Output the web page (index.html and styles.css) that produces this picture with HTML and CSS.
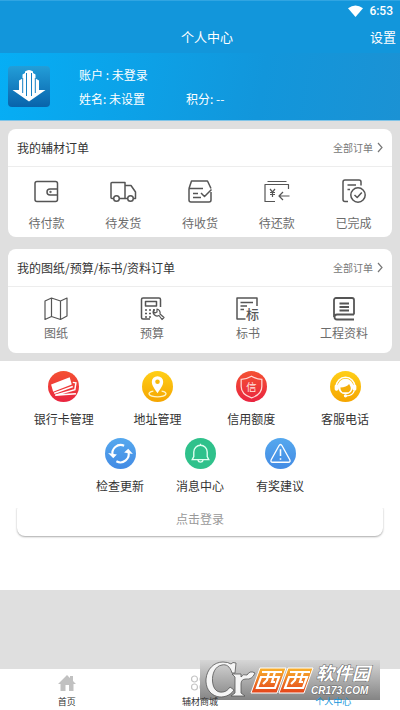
FILE: index.html
```html
<!DOCTYPE html>
<html lang="zh-CN">
<head>
<meta charset="utf-8">
<meta name="viewport" content="width=device-width, initial-scale=1">
<title>个人中心</title>
<link rel="stylesheet" href="styles.css">
</head>
<body>
<header class="top">
  <div class="status">
    <svg width="15" height="12" viewBox="0 0 15 12"><path d="M0 3.2Q7.500-2.400 15 3.200L7.500 12Z" fill="#fff"/></svg>
    <span>6:53</span>
  </div>
  <div class="bar">
    <h1>个人中心</h1>
    <a class="settings" href="#settings">设置</a>
  </div>
</header>
<section class="profile">
  <svg class="avatar" width="42" height="41" viewBox="0 0 42 41">
    <defs><linearGradient id="av" x2="0" y2="1"><stop stop-color="#239ed8"/><stop offset="1" stop-color="#0863ab"/></linearGradient></defs>
    <rect width="42" height="41" rx="4" fill="url(#av)"/>
    <path d="M4.500 24H11V14.500L14.500 12.500V8.500L17 7V5.500Q21 2.500 25 5.500V7L27.500 8.500V12.500L31 14.500V24H37.500L21 35.500Z" fill="#fff"/>
    <path d="M14.700 12V27M27.300 12V27M18.500 7V30M23.500 7V30" stroke="#1580c3" stroke-width="1"/>
  </svg>
  <div class="info">
    <p>账户 : 未登录</p>
    <div class="pair"><p>姓名: 未设置</p><p>积分: --</p></div>
  </div>
</section>
<main>
  <section class="card">
    <div class="card-head">
      <h2>我的辅材订单</h2>
      <a href="#orders">全部订单<svg width="6" height="11" viewBox="0 0 6 11"><path d="M1 1L5 5.500L1 10"/></svg></a>
    </div>
    <nav class="orders">
      <a href="#pay"><svg class="line" viewBox="0 0 28 28"><rect x="3" y="3.500" width="22.500" height="20" rx="2"/><path d="M25.500 11H18a3 3 0 0 0 0 6h7.500"/><circle cx="18.500" cy="14" r=".4"/></svg>待付款</a>
      <a href="#ship"><svg class="line" viewBox="0 0 28 28"><path d="M4.500 20.500H3a1 1 0 0 1-1-1V5.500a1 1 0 0 1 1-1H16V20.500H10.500M16 7.500H22L26.500 14V20.500H24.500M16 20.500H18.500"/><circle cx="7.500" cy="20.500" r="2.800"/><circle cx="21.500" cy="20.500" r="2.800"/></svg>待发货</a>
      <a href="#receive"><svg class="line" viewBox="0 0 28 28"><path d="M3 10.500L5.500 3H21.500L25 10.500M17 10.500H3V22a2 2 0 0 0 2 2H23a2 2 0 0 0 2-2V14M7 15.500H12M7 19.500H15M15 15L18.500 18.500L25.500 11.500"/></svg>待收货</a>
      <a href="#repay"><svg class="line thin" viewBox="0 0 28 28"><path d="M4.500 3.500H23.500M12 23.500H2V6.500H25.500V11M7 11L9.500 14L12 11M9.500 14V19M7 14.500H12M7 16.500H12M26.500 18H16M20 14L16 18L20 22"/></svg>待还款</a>
      <a href="#done"><svg class="line" viewBox="0 0 28 28"><path d="M8 23.500H5a2 2 0 0 1-2-2V4a2 2 0 0 1 2-2H19a2 2 0 0 1 2 2V7.500M7.500 7H16M7.500 11.500H10"/><circle cx="18" cy="17" r="7.200"/><path d="M14.500 17L17.200 19.500L21.800 14.500"/></svg>已完成</a>
    </nav>
  </section>
  <section class="card second">
    <div class="card-head">
      <h2>我的图纸/预算/标书/资料订单</h2>
      <a href="#documents">全部订单<svg width="6" height="11" viewBox="0 0 6 11"><path d="M1 1L5 5.500L1 10"/></svg></a>
    </div>
    <nav class="orders">
      <a href="#drawings"><svg class="line thin" viewBox="0 0 28 28"><path d="M3 6L9.500 3L18.500 6L25 3V21L18.500 24.500L9.500 21.500L3 24.500ZM9.500 3V21.500M18.500 6V24.500"/></svg>图纸</a>
      <a href="#budget"><svg class="line" viewBox="0 0 28 28"><path d="M12 24H5a1.500 1.500 0 0 1-1.500-1.500V4.500A1.500 1.500 0 0 1 5 3H21a1.500 1.500 0 0 1 1.500 1.500V12M7.500 6.500H18.500V11H7.500Z"/><path d="M7 15H17M7 18.500H14M7 22H14" stroke-dasharray="2 2"/><path d="M16 14.500a4 4 0 0 0 5 6L24 24.500L26 22.500L22 19a4 4 0 0 0-3-5V17L17 18L15.500 16.500Z" stroke-width="1.200"/></svg>预算</a>
      <a href="#bids"><svg class="line" viewBox="0 0 28 28"><path d="M11.500 24H3V3H23V11M6.500 7.500H19M6.500 11H13M6.500 14.500H10"/><text x="12" y="23.500">标</text></svg>标书</a>
      <a href="#project"><svg class="line bold" viewBox="0 0 28 28"><path d="M24 19.500H7a2.500 2.500 0 0 0 0 5H24M4 22V5a2 2 0 0 1 2-2H22a2 2 0 0 1 2 2V19.500M9.500 8.500H19M9.500 12H19M9.500 15.500H19"/></svg>工程资料</a>
    </nav>
  </section>
  <section class="tools">
    <nav class="tool-row">
      <a href="#cards"><svg viewBox="0 0 30 30"><defs><linearGradient id="red" x2="0" y2="1"><stop stop-color="#f45132"/><stop offset="1" stop-color="#e92440"/></linearGradient></defs><circle cx="15" cy="15" r="15" fill="url(#red)"/><path d="M3 13L21 6L23 13L5 20Z" fill="#fff"/><path d="M6 21.500L24 15M24 11L27 11.500L26 18L7 23.500L27 22" fill="none" stroke="#fff" stroke-width="1.400"/></svg>银行卡管理</a>
      <a href="#address"><svg viewBox="0 0 30 30"><defs><linearGradient id="gold" x2="0" y2="1"><stop stop-color="#ffcf18"/><stop offset="1" stop-color="#f5a500"/></linearGradient></defs><circle cx="15" cy="15" r="15" fill="url(#gold)"/><path d="M15 21.500C12 17 9.500 14 9.500 10.500a5.500 5.500 0 0 1 11 0C20.500 14 18 17 15 21.500Z" fill="#fff"/><circle cx="15" cy="10.500" r="2.200" fill="#f8b90d"/><path d="M11 19.500C4 20.500 6 25 15 25S26 20.500 19 19.500" fill="none" stroke="#fff5c9" stroke-width="1.300"/></svg>地址管理</a>
      <a href="#credit"><svg viewBox="0 0 30 30"><circle cx="15" cy="15" r="15" fill="url(#red)"/><path d="M15 5Q20 8 25 8V15C25 21 21 24 15 26C9 24 5 21 5 15V8Q10 8 15 5Z" fill="none" stroke="#ffd9d5" stroke-width="1.200"/><text class="credit" x="15" y="19">信</text></svg>信用额度</a>
      <a href="#service"><svg viewBox="0 0 30 30"><circle cx="15" cy="15" r="15" fill="url(#gold)"/><path d="M6 15a9 9 0 0 1 18 0" fill="none" stroke="#fff" stroke-width="1.500"/><circle cx="15" cy="15" r="7.500" fill="#fff"/><path d="M10 16Q16 15.500 18.500 12.500Q22 18 18 20.500H12Q10 19 10 16Z" fill="#f4ae0b"/><rect x="4.500" y="13" width="3.500" height="6" rx="1.500" fill="#fff"/><rect x="22" y="13" width="3.500" height="6" rx="1.500" fill="#fff"/><path d="M23.500 19Q22 24 16 24" fill="none" stroke="#fff" stroke-width="1.300"/><circle cx="15" cy="24" r="1.600" fill="#fff"/></svg>客服电话</a>
    </nav>
    <nav class="tool-row short">
      <a href="#update"><svg viewBox="0 0 30 30"><defs><linearGradient id="blue" x2="0" y2="1"><stop stop-color="#55a8ee"/><stop offset="1" stop-color="#438be4"/></linearGradient></defs><circle cx="15" cy="15" r="15" fill="url(#blue)"/><path d="M7.500 17A8 8 0 0 1 18.500 7.500M22.500 13A8 8 0 0 1 11 22.500" fill="none" stroke="#fff" stroke-width="2"/><path d="M3 14.500L11.500 16L8 19.500ZM27 15.500L18.500 14L22.500 10.500Z" fill="#fff"/></svg>检查更新</a>
      <a href="#messages"><svg viewBox="0 0 30 30"><circle cx="15" cy="15" r="15" fill="#2fc18b"/><path d="M7 21H23L21.500 18V13.500a6.500 6.500 0 0 0-13 0V18ZM15 7V5.500M12.500 21.500a2.600 2.600 0 0 0 5 0" fill="none" stroke="#e2fff1" stroke-width="1.300"/></svg>消息中心</a>
      <a href="#suggestions"><svg viewBox="0 0 30 30"><circle cx="15" cy="15" r="15" fill="url(#blue)"/><path d="M13.500 7.500Q15 5 16.500 7.500L24 21Q25 23.500 22.500 23.500H7.500Q5 23.500 6 21Z" fill="none" stroke="#fff" stroke-width="1.300"/><path d="M15 11V17.500M15 19.500V21" stroke="#fff" stroke-width="1.500"/></svg>有奖建议</a>
    </nav>
    <button class="login" type="button">点击登录</button>
  </section>
</main>
<footer class="tabs">
  <a href="#home"><svg width="18" height="16" viewBox="0 0 18 16"><path d="M0 9L9 0L12 3V1H15V6L18 9H15.500V16H11V10H7.500V16H2.500V9Z" fill="#c1c1c1"/></svg><span>首页</span></a>
  <a href="#mall"><svg width="18" height="16" viewBox="0 0 18 16"><g fill="none" stroke="#c4c4c4" stroke-width="1.200"><circle cx="3.500" cy="4" r="3"/><circle cx="12" cy="4" r="3"/><circle cx="3.500" cy="12" r="3"/><circle cx="12" cy="12" r="3"/></g></svg><span>辅材商城</span></a>
  <a class="current" href="#me"><svg width="18" height="16" viewBox="0 0 18 16"><path d="M9 1a3.500 3.500 0 1 1 0 7a3.500 3.500 0 0 1 0-7ZM2 16Q2 9 9 9T16 16Z" fill="#159be0"/></svg><span>个人中心</span></a>
  <svg class="stamp" width="180" height="40" viewBox="0 0 180 40" role="img" aria-label="西西软件园">
    <defs>
      <linearGradient id="plate" x2="0" y2="1"><stop stop-color="#d6d6d6"/><stop offset="1" stop-color="#848484"/></linearGradient>
      <linearGradient id="tile" x2="0" y2="1"><stop stop-color="#f8b22d"/><stop offset="1" stop-color="#e4431b"/></linearGradient>
    </defs>
    <rect width="180" height="40" fill="url(#plate)"/>
    <path d="M36 3L35 13H32C30 6 26 4 22 5C15 6 12 14 12.500 21C13 29 17 33 23 32C26 31.500 28 30 30 27L34 30C30 36 23 38 17 36.500C9 34 5.500 27 6 19C7 9 14 2 23 2Q28 2 31 4L33 2.500Z" fill="#f5f5f5" stroke="#555" stroke-width=".8"/>
    <path d="M32 14H41V17Q43 13.500 47 15Q50 10 55 13Q52 20 46 19Q41 19 41 24V33L45 36H31L35 33V17Z" fill="#f5f5f5" stroke="#555" stroke-width=".8"/>
    <path d="M60 8H86L77 33H51ZM88 8H113L104 33H79Z" fill="url(#tile)" stroke="#fff" stroke-width="1"/>
    <g fill="none" stroke="#fff" stroke-width="2.200"><path d="M62 12H82M61 17H79L75 28H57ZM69 12L67 20L63 24M75 12L72 22H75M90 12H110M89 17H107L103 28H85ZM97 12L95 20L91 24M103 12L100 22H103"/></g>
    <text class="stamp-name" x="116" y="20">软件园</text>
    <text class="stamp-site" x="111" y="34">CR173.COM</text>
  </svg>
</footer>
</body>
</html>
```
FILE: styles.css
```css
* { box-sizing: border-box; }
body {
  margin: 0;
  min-height: 100vh;
  display: flex;
  flex-direction: column;
  background: #dfdfdf;
  color: #333;
  font: 12px/18px "Noto Sans CJK SC", sans-serif;
}
h1, h2, p { margin: 0; font-weight: 400; }
a { color: inherit; text-decoration: none; }

.top { background: #1296db; color: #fff; border-top: 1px solid #30a5e2; }
.status {
  height: 20px;
  padding-right: 7px;
  display: flex;
  justify-content: flex-end;
  align-items: center;
  gap: 6px;
  font: 500 12px/20px Roboto, sans-serif;
}
.bar {
  height: 32px;
  padding: 0 4px 0 18px;
  display: grid;
  grid-template-columns: 1fr auto 1fr;
  align-items: center;
}
.bar h1, .settings { font-size: 13px; line-height: 20px; }
.bar h1 { grid-column: 2; }
.settings { justify-self: end; }

.profile {
  height: 68px;
  padding: 0 8px;
  display: flex;
  align-items: center;
  gap: 29px;
  background: linear-gradient(100deg, #06aef5, #1296db 65%, #1b92d4);
  border-bottom: 1px solid #82c5e8;
  color: #fff;
}
.info { display: flex; flex-direction: column; gap: 6px; }
.pair { display: flex; gap: 41px; }

.card { margin: 8px 8px 0; background: #fff; border-radius: 8px; padding-bottom: 5px; }
.card.second { margin-top: 12px; }
.card-head {
  height: 38px;
  padding: 0 9px;
  display: flex;
  align-items: center;
  justify-content: space-between;
  border-bottom: 1px solid #ededed;
}
.card-head h2 { font-size: 12px; }
.card-head a { display: flex; align-items: center; gap: 4px; font-size: 10px; color: #777; }
.card-head svg { fill: none; stroke: #777; stroke-width: 1.2px; }
.orders { display: flex; padding-top: 11px; }
.orders a {
  flex: 1;
  display: flex;
  flex-direction: column;
  align-items: center;
  gap: 8px;
  color: #6c6c6c;
}
.second .orders { padding-top: 8px; }
.second .orders a { gap: 1px; }
.second.card { padding-bottom: 11px; }
.line {
  width: 28px;
  height: 28px;
  fill: none;
  stroke: #555;
  stroke-width: 1.5px;
  stroke-linejoin: round;
}
.thin { stroke-width: 1.2px; }
.bold { stroke-width: 1.8px; }
.line text { font-size: 13px; font-weight: 500; fill: #555; stroke: none; }

.tools { margin-top: 8px; padding: 10px 0 54px; background: #fff; }
.tool-row { display: flex; padding: 0 8px 0 17px; }
.tool-row a { flex: 1; display: flex; flex-direction: column; align-items: center; gap: 8px; }
.tool-row svg { width: 31px; height: 31px; }
.tool-row.short { margin-top: 10px; padding: 0 80px; }
.credit { font-size: 10px; fill: #ffe7e2; text-anchor: middle; }
.login {
  display: block;
  width: calc(100% - 34px);
  height: 34px;
  margin: 7px auto 0;
  border: 0;
  border-radius: 8px;
  background: #fff;
  box-shadow: 0 1px 2px #aaa;
  clip-path: inset(6px -4px -4px);
  color: #999;
  font: inherit;
}

.tabs {
  position: relative;
  margin-top: auto;
  height: 41px;
  display: flex;
  background: #fff;
  font-size: 9px;
  line-height: 14px;
}
.tabs a { flex: 1; display: flex; flex-direction: column; align-items: center; gap: 4px; padding-top: 6px; }
.tabs span { position: relative; z-index: 2; }
.tabs .current { color: #1296db; }
.stamp { position: absolute; right: 20px; bottom: 10px; z-index: 1; }
.stamp text { fill: #fff; stroke: #666; stroke-width: 1px; paint-order: stroke; font-style: italic; font-weight: 700; }
.stamp-name { font-size: 18px; }
.stamp-site { font-family: "Liberation Sans", sans-serif; font-size: 10px; }
```
